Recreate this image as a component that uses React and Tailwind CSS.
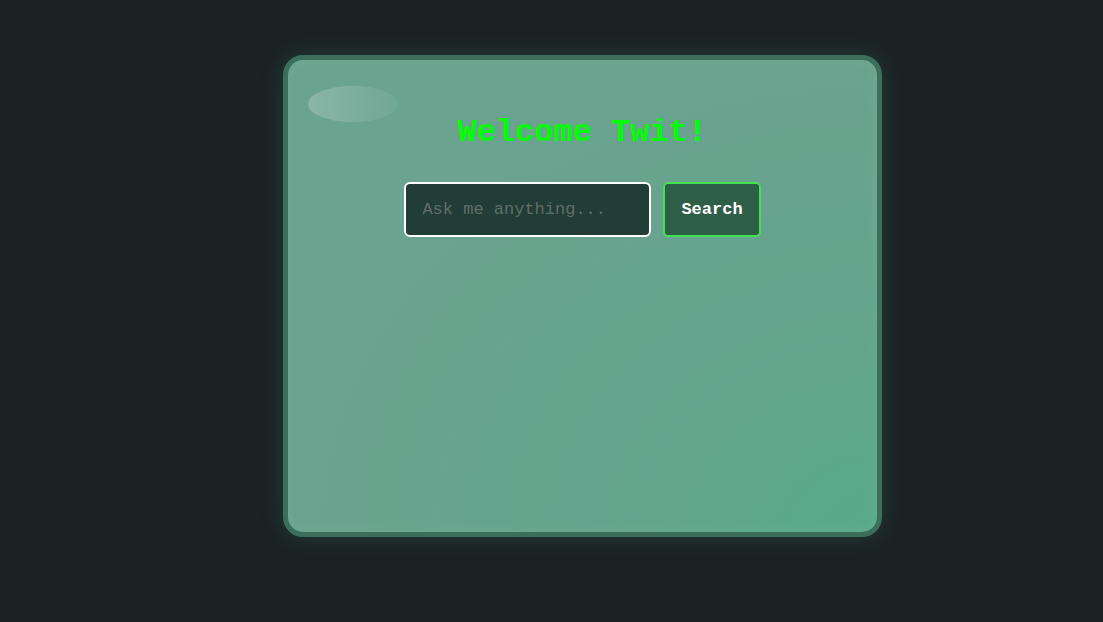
const App = () => {
  return (
    <div className="min-h-screen w-full bg-[#1b2224] pl-[283px] pt-[55px]">
      <div className="relative flex h-[482px] w-[599px] flex-col items-center rounded-[20px] border-[5px] border-[#3b6f5b] bg-[radial-gradient(ellipse_at_100%_100%,#58a98b_0%,#65a48e_35%,#6aa38f_70%)] shadow-[0_0_22px_rgba(70,160,115,0.22),inset_0_0_12px_rgba(255,255,255,0.08)]">
        <div className="absolute left-[20px] top-[26px] h-[36px] w-[90px] rounded-[50%] bg-[linear-gradient(90deg,rgba(255,255,255,0.22),rgba(255,255,255,0.04))]" />

        <h1 className="mt-[55px] font-['Courier_New','Nimbus_Mono_PS',FreeMono,'Liberation_Mono',monospace] text-[32px] font-bold leading-[36px] text-[#00ff00]">
          Welcome Twit!
        </h1>

        <div className="mt-[31px] flex flex-row gap-[12px]">
          <input
            type="text"
            placeholder="Ask me anything..."
            className="h-[55px] w-[247px] rounded-[6px] border-2 border-white bg-[#223d35] px-4 font-['Courier_New','Nimbus_Mono_PS',FreeMono,'Liberation_Mono',monospace] text-[17px] text-white placeholder:text-[#5f6f68] outline-none"
          />
          <button className="h-[55px] rounded-[5px] border-2 border-[#44e14f] bg-[#2f5e48] px-4 font-['Courier_New','Nimbus_Mono_PS',FreeMono,'Liberation_Mono',monospace] text-[17px] font-bold text-white">
            Search
          </button>
        </div>
      </div>
    </div>
  );
};

export default App;
